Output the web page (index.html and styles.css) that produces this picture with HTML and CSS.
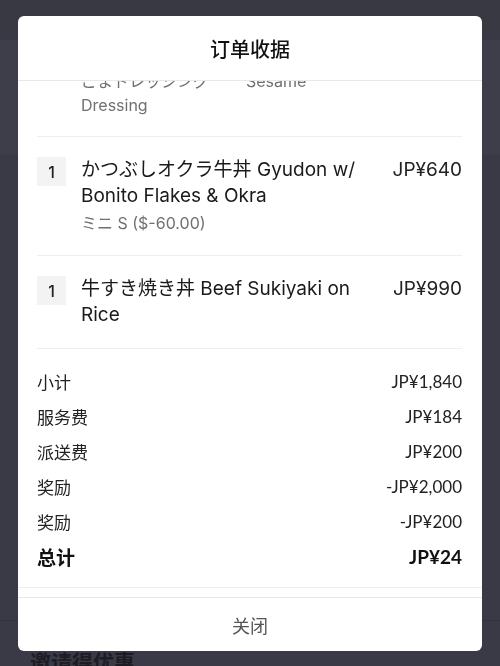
FILE: index.html
```html
<!DOCTYPE html>
<html lang="zh-CN">
<head>
    <meta charset="UTF-8">
    <meta name="viewport" content="width=device-width, initial-scale=1.0">
    <title>订单收据</title>
    <link rel="stylesheet" href="styles.css">
</head>
<body>
    <div class="page">
        <div class="page-top"></div>
        <div class="page-card"></div>
        <div class="page-body"></div>
        <h2 class="page-heading">邀请得优惠</h2>
    </div>

    <div class="modal">
        <div class="modal-header">订单收据</div>

        <div class="modal-scroll">
            <div class="items">
                <div class="item item-tail">
                    <div class="item-mod">ごまドレッシング<span class="mod-en">Sesame</span><br>Dressing</div>
                </div>

                <div class="item">
                    <div class="qty">1</div>
                    <div class="item-info">
                        <div class="item-name">かつぶしオクラ牛丼 Gyudon w/ Bonito Flakes &amp; Okra</div>
                        <div class="item-mod">ミニ S ($-60.00)</div>
                    </div>
                    <div class="item-price">JP¥640</div>
                </div>

                <div class="item">
                    <div class="qty">1</div>
                    <div class="item-info">
                        <div class="item-name">牛すき焼き丼 Beef Sukiyaki on Rice</div>
                    </div>
                    <div class="item-price">JP¥990</div>
                </div>
            </div>

            <div class="totals">
                <div class="total-row"><span>小计</span><span>JP¥1,840</span></div>
                <div class="total-row"><span>服务费</span><span>JP¥184</span></div>
                <div class="total-row"><span>派送费</span><span>JP¥200</span></div>
                <div class="total-row"><span>奖励</span><span>-JP¥2,000</span></div>
                <div class="total-row"><span>奖励</span><span>-JP¥200</span></div>
                <div class="total-row total-final"><span>总计</span><span>JP¥24</span></div>
            </div>

            <div class="more"></div>
        </div>

        <div class="modal-footer">关闭</div>
    </div>
</body>
</html>
```

FILE: styles.css
```css
body {
    margin: 0;
    background-color: #3a3a46;
    font-family: Inter, "Noto Sans CJK JP", sans-serif;
    overflow: hidden;
}

.page {
    height: 666px;
}

.page-top {
    height: 40px;
    background-color: #393944;
}

.page-card {
    height: 115px;
    background-color: #3e3e4a;
}

.page-body {
    height: 465px;
    background-color: #3a3a46;
    border-bottom: 1px solid #34343f;
}

.page-heading {
    margin: 0;
    padding: 27px 0 0 30px;
    font-family: "Noto Sans CJK SC", sans-serif;
    font-size: 21px;
    font-weight: 700;
    line-height: 26px;
    color: #1c1c22;
}

.modal {
    position: fixed;
    top: 16px;
    left: 18px;
    width: 464px;
    height: 635px;
    background-color: #fff;
    border-radius: 6px;
    display: flex;
    flex-direction: column;
    overflow: hidden;
}

.modal-header {
    height: 64px;
    flex-shrink: 0;
    display: flex;
    justify-content: center;
    align-items: center;
    border-bottom: 1px solid #e8e8e8;
    font-family: "Noto Sans CJK SC", sans-serif;
    font-size: 20px;
    font-weight: 500;
    color: #111;
}

.modal-scroll {
    flex: 1;
    overflow: hidden;
}

.items {
    padding: 0 20px 0 19px;
}

.item {
    display: flex;
    align-items: flex-start;
    padding: 20px 0;
    border-bottom: 1px solid #eeeeee;
}

.item-tail {
    margin-top: -12px;
    padding: 0 0 19px 44px;
}

.qty {
    width: 29px;
    height: 29px;
    flex-shrink: 0;
    margin-right: 15px;
    background-color: #f3f3f3;
    display: flex;
    justify-content: center;
    align-items: center;
    font-size: 16px;
    font-weight: 500;
    color: #222;
}

.item-info {
    flex: 1;
    margin-right: 24px;
}

.item-name {
    font-size: 19px;
    line-height: 26px;
    color: #1a1a1a;
}

.item-mod {
    margin-top: 2px;
    font-size: 16px;
    line-height: 24px;
    color: #707070;
}

.item-tail .item-mod {
    margin-top: 0;
}

.mod-en {
    margin-left: 37px;
}

.item-price {
    font-size: 19px;
    line-height: 26px;
    color: #222;
}

.totals {
    padding: 15px 20px 13px 19px;
    border-bottom: 1px solid #eeeeee;
}

.total-row {
    height: 35px;
    display: flex;
    justify-content: space-between;
    align-items: center;
    font-family: Lato, "Noto Sans CJK SC", sans-serif;
    font-size: 17px;
    color: #222;
}

.total-final {
    font-size: 19px;
    font-weight: 700;
    color: #111;
}

.more {
    height: 40px;
}

.modal-footer {
    height: 53px;
    flex-shrink: 0;
    display: flex;
    justify-content: center;
    align-items: center;
    border-top: 1px solid #e8e8e8;
    font-family: "Noto Sans CJK SC", sans-serif;
    font-size: 18px;
    color: #555;
}
```
